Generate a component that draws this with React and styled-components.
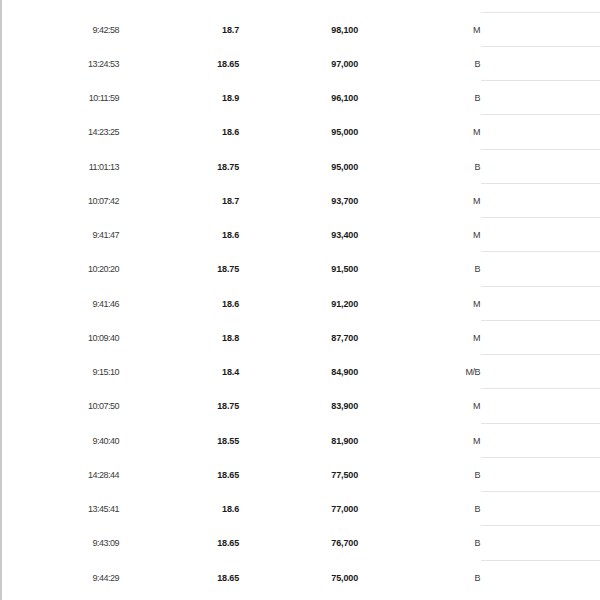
import React from "react";
import styled, { createGlobalStyle } from "styled-components";

const Global = createGlobalStyle`
  html, body { margin: 0; padding: 0; background: #fff; }
  body { font-family: "Liberation Sans", Arial, sans-serif; }
`;

const Page = styled.div`
  width: 600px;
  height: 600px;
  overflow: hidden;
  box-sizing: border-box;
  border-left: 2px solid #c9c9c9;
  padding-top: 11.5px;
`;

const Table = styled.div`
  display: grid;
  grid-template-columns: 118px 120px 120px 121px 1fr;
`;

const Cell = styled.div`
  height: 34.25px;
  box-sizing: border-box;
  display: flex;
  align-items: center;
  justify-content: flex-end;
  padding-top: 2px;
  padding-right: ${(p) => (p.$pad != null ? p.$pad : 1)}px;
  font-size: 9px;
  letter-spacing: ${(p) => (p.$bold ? "-0.15px" : "-0.5px")};
  font-weight: ${(p) => (p.$bold ? 700 : 400)};
  color: ${(p) => (p.$bold ? "#1a1a1a" : "#3a3a3a")};
  white-space: nowrap;
`;

const Blank = styled.div`
  height: 34.25px;
  box-sizing: border-box;
  border-top: 1.5px solid #e4e4e4;
`;

const rows = [
  ["9:42:58", "18.7", "98,100", "M"],
  ["13:24:53", "18.65", "97,000", "B"],
  ["10:11:59", "18.9", "96,100", "B"],
  ["14:23:25", "18.6", "95,000", "M"],
  ["11:01:13", "18.75", "95,000", "B"],
  ["10:07:42", "18.7", "93,700", "M"],
  ["9:41:47", "18.6", "93,400", "M"],
  ["10:20:20", "18.75", "91,500", "B"],
  ["9:41:46", "18.6", "91,200", "M"],
  ["10:09:40", "18.8", "87,700", "M"],
  ["9:15:10", "18.4", "84,900", "M/B"],
  ["10:07:50", "18.75", "83,900", "M"],
  ["9:40:40", "18.55", "81,900", "M"],
  ["14:28:44", "18.65", "77,500", "B"],
  ["13:45:41", "18.6", "77,000", "B"],
  ["9:43:09", "18.65", "76,700", "B"],
  ["9:44:29", "18.65", "75,000", "B"],
];

export default function App() {
  return (
    <>
      <Global />
      <Page>
        <Table>
          {rows.map((r, i) => (
            <React.Fragment key={i}>
              <Cell>{r[0]}</Cell>
              <Cell $bold>{r[1]}</Cell>
              <Cell $bold $pad={2}>{r[2]}</Cell>
              <Cell>{r[3]}</Cell>
              <Blank />
            </React.Fragment>
          ))}
        </Table>
      </Page>
    </>
  );
}
